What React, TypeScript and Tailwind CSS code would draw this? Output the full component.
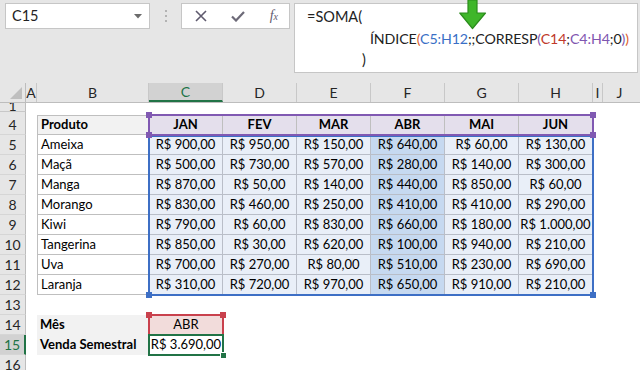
import React from 'react';

const months = ['JAN', 'FEV', 'MAR', 'ABR', 'MAI', 'JUN'];

const rows: [string, number[]][] = [
  ['Ameixa', [900, 950, 150, 640, 60, 130]],
  ['Maçã', [500, 730, 570, 280, 140, 300]],
  ['Manga', [870, 50, 140, 440, 850, 60]],
  ['Morango', [830, 460, 250, 410, 410, 290]],
  ['Kiwi', [790, 60, 830, 660, 180, 1000]],
  ['Tangerina', [850, 30, 620, 100, 940, 210]],
  ['Uva', [700, 270, 80, 510, 230, 690]],
  ['Laranja', [310, 720, 970, 650, 910, 210]],
];

const brl = (n: number) => {
  const int = String(n).replace(/\B(?=(\d{3})+(?!\d))/g, '.');
  return `R$ ${int},00`;
};

const cols = ['C', 'D', 'E', 'F', 'G', 'H'];

const RowHead = ({ n, active }: { n: string; active?: boolean }) => (
  <div
    className={`w-[26px] shrink-0 flex items-center justify-center border-b border-[#d6d6d6] text-[14px] ${
      active
        ? 'bg-[#d2d2d2] text-[#217346] border-r-2 border-r-[#217346]'
        : 'bg-[#e6e6e6] text-[#262626] border-r border-r-[#bdbdbd]'
    }`}
  >
    {n}
  </div>
);

const Handle = ({ x, y, color }: { x: number; y: number; color: string }) => (
  <div
    className={`absolute w-[6px] h-[6px] ${color}`}
    style={{ left: x - 3, top: y - 3 }}
  />
);

export default function App() {
  return (
    <div className="relative w-[640px] h-[370px] overflow-hidden bg-white font-['Lato',sans-serif] text-black">
      {/* formula bar */}
      <div className="h-[83px] bg-[#e6e6e6] flex items-start pt-[3px] pl-[5px] pr-[2px]">
        <div className="w-[145px] h-[26px] bg-white border border-[#c6c6c6] flex items-center justify-between pl-[6px] pr-[7px]">
          <span className="text-[14.5px] text-[#222]">C15</span>
          <svg width="8" height="5" viewBox="0 0 8 5">
            <path d="M0 0h8L4 4.5z" fill="#6b6b6b" />
          </svg>
        </div>
        <div className="w-[31px] h-[26px] flex flex-col items-center justify-center gap-[3px]">
          <span className="w-[2px] h-[2px] bg-[#b3b3b3]" />
          <span className="w-[2px] h-[2px] bg-[#b3b3b3]" />
          <span className="w-[2px] h-[2px] bg-[#b3b3b3]" />
        </div>
        <div className="w-[109px] h-[26px] bg-white border border-[#c6c6c6] flex items-center justify-between pl-[13px] pr-[11px]">
          <svg width="12" height="12" viewBox="0 0 12 12">
            <path d="M1 1L11 11M11 1L1 11" stroke="#5f5a6e" strokeWidth="1.6" />
          </svg>
          <svg width="14" height="11" viewBox="0 0 14 11">
            <path d="M1 5.5L5 9.5L13 1" stroke="#6d6a78" strokeWidth="2.2" fill="none" />
          </svg>
          <span className="font-['Liberation_Serif',serif] italic text-[14px] text-[#5f5a6e] leading-none">
            f<span className="text-[10px]">x</span>
          </span>
        </div>
        <div className="ml-[4px] flex-1 h-[70px] bg-white border border-[#c6c6c6] pl-[12px] pt-[2px] text-[14.5px] leading-[21.5px] text-[#222]">
          <div>=SOMA(</div>
          <div className="pl-[63px] whitespace-nowrap text-[14.2px] tracking-[-0.1px]">
            ÍNDICE<span className="text-[#e0602a]">(</span>
            <span className="text-[#3a6fc6]">C5:H12</span>;;CORRESP
            <span className="text-[#7f56b0]">(</span>
            <span className="text-[#c0392b]">C14</span>;
            <span className="text-[#7f56b0]">C4:H4</span>;0
            <span className="text-[#7f56b0]">)</span>
            <span className="text-[#e0602a]">)</span>
          </div>
          <div className="pl-[55px]">)</div>
        </div>
      </div>

      {/* green arrow */}
      <svg className="absolute left-[459px] top-0" width="28" height="30" viewBox="0 0 28 30">
        <path
          d="M9 0H18V13H26.5L13.5 28.5L0.8 13H9Z"
          fill="#3fb62a"
          stroke="#2b8c1c"
          strokeWidth="1.2"
          strokeLinejoin="round"
        />
      </svg>

      {/* column headers */}
      <div className="flex h-[20px] bg-[#e6e6e6] border-b border-[#bdbdbd] text-[14px] text-[#262626]">
        <div className="w-[26px] shrink-0 border-r border-[#bdbdbd] relative">
          <svg className="absolute right-[3px] bottom-[3px]" width="12" height="12" viewBox="0 0 12 12">
            <path d="M12 0V12H0Z" fill="#bfbfbf" />
          </svg>
        </div>
        <div className="w-[11px] shrink-0 border-r border-[#c8c8c8] flex items-center justify-center">A</div>
        <div className="w-[112px] shrink-0 border-r border-[#c8c8c8] flex items-center justify-center">B</div>
        {cols.map((c) => (
          <div
            key={c}
            className={`w-[74px] shrink-0 flex items-center justify-center border-r border-[#c8c8c8] ${
              c === 'C' ? 'bg-[#d2d2d2] text-[#217346] border-b-2 border-b-[#217346]' : ''
            }`}
          >
            {c}
          </div>
        ))}
        <div className="w-[10px] shrink-0 border-r border-[#c8c8c8] flex items-center justify-center">I</div>
        <div className="flex-1 flex items-center justify-center pr-[4px]">J</div>
      </div>

      {/* sheet */}
      <div className="flex flex-col text-[13px]">
        <div className="flex h-[9px] overflow-hidden">
          <div className="w-[26px] h-[9px] shrink-0 bg-[#e6e6e6] border-r border-[#bdbdbd] border-b border-b-[#c8c8c8] text-center text-[14px] text-[#262626] leading-[6px]">
            1
          </div>
        </div>
        <div className="flex h-[3px]">
          <div className="w-[26px] shrink-0 bg-[#e6e6e6] border-r border-[#bdbdbd]" />
        </div>

        {/* row 4 */}
        <div className="flex h-[20px]">
          <RowHead n="4" />
          <div className="w-[11px] shrink-0" />
          <div className="w-[112px] shrink-0 bg-[#f2f2f2] border border-[#bfbfbf] font-bold pl-[3px] flex items-center">
            Produto
          </div>
          {months.map((m) => (
            <div
              key={m}
              className="w-[74px] shrink-0 bg-[#e4dfec] border-y border-r border-[#bfbfbf] font-bold flex items-center justify-center"
            >
              {m}
            </div>
          ))}
        </div>

        {rows.map(([name, vals], i) => (
          <div key={name} className="flex h-[20px]">
            <RowHead n={String(i + 5)} />
            <div className="w-[11px] shrink-0" />
            <div className="w-[112px] shrink-0 bg-white border-x border-b border-[#bfbfbf] pl-[3px] flex items-center">
              {name}
            </div>
            {vals.map((v, j) => (
              <div
                key={j}
                className={`w-[74px] shrink-0 border-r border-b border-[#b9bec8] flex items-center justify-center whitespace-nowrap ${
                  j === 3 ? 'bg-[#c6d9f0]' : 'bg-[#e9eff8]'
                }`}
              >
                {brl(v)}
              </div>
            ))}
          </div>
        ))}

        <div className="flex h-[20px]">
          <RowHead n="13" />
        </div>
        <div className="flex h-[20px]">
          <RowHead n="14" />
          <div className="w-[11px] shrink-0" />
          <div className="w-[112px] shrink-0 bg-[#f2f2f2] font-bold pl-[3px] flex items-center">Mês</div>
          <div className="w-[74px] shrink-0 bg-[#f2dcdb] flex items-center justify-center">ABR</div>
        </div>
        <div className="flex h-[20px]">
          <RowHead n="15" active />
          <div className="w-[11px] shrink-0" />
          <div className="w-[112px] shrink-0 bg-[#f2f2f2] font-bold pl-[3px] flex items-center whitespace-nowrap">
            Venda Semestral
          </div>
          <div className="w-[74px] shrink-0 bg-white flex items-center justify-center whitespace-nowrap">
            R$ 3.690,00
          </div>
        </div>
        <div className="flex h-[20px]">
          <RowHead n="16" />
        </div>
      </div>

      {/* range highlights */}
      <div className="absolute left-[148px] top-[135px] w-[446px] h-[161px] border-2 border-[#3d6fc5]" />
      <Handle x={149} y={295} color="bg-[#3d6fc5]" />
      <Handle x={593} y={295} color="bg-[#3d6fc5]" />
      <div className="absolute left-[148px] top-[114px] w-[446px] h-[22px] border-2 border-[#8059b2]" />
      <Handle x={149} y={115} color="bg-[#8059b2]" />
      <Handle x={149} y={135} color="bg-[#8059b2]" />
      <Handle x={593} y={115} color="bg-[#8059b2]" />
      <Handle x={593} y={135} color="bg-[#8059b2]" />
      <div className="absolute left-[148px] top-[314px] w-[76px] h-[22px] border-2 border-[#c9414d]" />
      <Handle x={149} y={315} color="bg-[#c9414d]" />
      <Handle x={223} y={315} color="bg-[#c9414d]" />
      <div className="absolute left-[148px] top-[334px] w-[76px] h-[22px] border-2 border-[#217346]" />
      <div className="absolute left-[220px] top-[352px] w-[7px] h-[7px] bg-[#217346] border border-white" />
    </div>
  );
}
